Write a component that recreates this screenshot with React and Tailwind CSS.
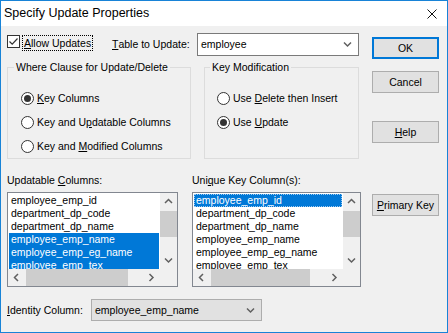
const Chevron = ({ dir = 'down', className = '' }) => {
  const paths = {
    up: 'M1 5 L4.5 1.5 L8 5',
    down: 'M1 1.5 L4.5 5 L8 1.5',
    left: 'M5 1 L1.5 4.5 L5 8',
    right: 'M1.5 1 L5 4.5 L1.5 8',
  };
  const horiz = dir === 'left' || dir === 'right';
  return (
    <svg width={horiz ? 7 : 9} height={horiz ? 9 : 7} className={className}>
      <path d={paths[dir]} fill="none" stroke="#606060" strokeWidth="1.5" />
    </svg>
  );
};

const Radio = ({ checked, children }) => (
  <div className="h-[24px] flex items-center gap-[3px]">
    <span className="w-[13px] h-[13px] rounded-full border border-[#333] bg-white flex items-center justify-center shrink-0">
      {checked && <span className="w-[7px] h-[7px] rounded-full bg-[#333]" />}
    </span>
    <span>{children}</span>
  </div>
);

const Button = ({ children, def, className = '' }) => (
  <div
    className={`w-[67px] h-[22px] flex items-center justify-center bg-[#e1e1e1] ${
      def ? 'border-2 border-[#0078d7]' : 'border border-[#adadad]'
    } ${className}`}
  >
    {children}
  </div>
);

const ListBox = ({ items, selected, focus, width, thumb }) => (
  <div
    className="h-[95px] border border-[#828790] bg-white grid grid-cols-[1fr_17px] grid-rows-[1fr_17px]"
    style={{ width }}
  >
    <div className="overflow-hidden pt-[1px] px-[1px]">
      {items.map((it, i) => (
        <div
          key={it}
          className={`h-[13px] leading-[13px] pl-[2px] whitespace-nowrap ${
            selected.includes(i) ? 'bg-[#0078d7] text-white' : ''
          } ${focus === i ? 'outline outline-1 outline-dotted outline-[#9cc9ef] -outline-offset-1' : ''}`}
        >
          {it}
        </div>
      ))}
    </div>
    <div className="bg-[#f0f0f0] flex flex-col">
      <div className="h-[17px] flex items-center justify-center">
        <Chevron dir="up" />
      </div>
      <div className="flex-1 flex flex-col">
        <div className="mt-[1px] h-[26px] bg-[#cdcdcd]" />
      </div>
      <div className="h-[17px] flex items-center justify-center">
        <Chevron dir="down" />
      </div>
    </div>
    <div className="bg-[#f0f0f0] flex">
      <div className="w-[17px] flex items-center justify-center">
        <Chevron dir="left" />
      </div>
      <div className="flex-1 flex">
        <div className="ml-[1px] h-full bg-[#cdcdcd]" style={{ width: thumb }} />
      </div>
      <div className="w-[17px] flex items-center justify-center">
        <Chevron dir="right" />
      </div>
    </div>
    <div className="bg-[#f0f0f0]" />
  </div>
);

const columns = [
  'employee_emp_id',
  'department_dp_code',
  'department_dp_name',
  'employee_emp_name',
  'employee_emp_eg_name',
  'employee_emp_tex',
];

export default function App() {
  return (
    <div className="w-[448px] h-[333px] border border-[#1883d7] bg-[#f0f0f0] flex flex-col text-black text-[10.5px] leading-[13px] font-['Liberation_Sans',Arial,sans-serif]">
      {/* title bar */}
      <div className="h-[25px] bg-white flex items-center justify-between pl-[3px] pr-[10px] shrink-0">
        <span className="text-[12.5px]">Specify Update Properties</span>
        <svg width="10" height="10">
          <path d="M0.5 0.5 L9.5 9.5 M9.5 0.5 L0.5 9.5" stroke="#111" strokeWidth="1" />
        </svg>
      </div>

      <div className="flex pl-[6px]">
        {/* left column */}
        <div className="w-[354px] flex flex-col">
          <div className="mt-[7px] h-[23px] flex items-start">
            <div className="w-[105px] flex items-start mt-[2px]">
              <span className="w-[13px] h-[13px] border border-[#333] bg-white flex items-center justify-center shrink-0">
                <svg width="11" height="11">
                  <path d="M1.5 5.5 L4.2 8.2 L9.5 2.5" fill="none" stroke="#333" strokeWidth="1.2" />
                </svg>
              </span>
              <span className="ml-[2px] h-[16px] px-[1px] flex items-center border border-dotted border-black">
                <u>A</u>llow Updates
              </span>
            </div>
            <span className="w-[85px] h-[23px] flex items-center">
              <u>T</u>able to Update:
            </span>
            <div className="w-[162px] h-[23px] border border-[#7a7a7a] bg-white flex items-center justify-between pl-[3px] pr-[6px]">
              <span>employee</span>
              <Chevron dir="down" />
            </div>
          </div>

          <div className="mt-[5px] flex gap-[13px]">
            <fieldset className="w-[184px] h-[98px] border border-[#dcdcdc]">
              <legend className="ml-[6px] px-[2px] leading-[13px]">Where Clause for Update/Delete</legend>
              <div className="pt-[12px] pl-[13px]">
                <Radio checked>
                  <u>K</u>ey Columns
                </Radio>
                <Radio>
                  Key and U<u>p</u>datable Columns
                </Radio>
                <Radio>
                  Key and <u>M</u>odified Columns
                </Radio>
              </div>
            </fieldset>
            <fieldset className="w-[155px] h-[98px] border border-[#dcdcdc]">
              <legend className="ml-[5px] px-[2px] leading-[13px]">Key Modification</legend>
              <div className="pt-[12px] pl-[12px]">
                <Radio>
                  Use <u>D</u>elete then Insert
                </Radio>
                <Radio checked>
                  Use <u>U</u>pdate
                </Radio>
              </div>
            </fieldset>
          </div>

          <div className="mt-[15px] flex gap-[14px]">
            <div className="flex flex-col">
              <span className="h-[13px]">
                Updatable <u>C</u>olumns:
              </span>
              <div className="mt-[5px]">
                <ListBox items={columns} selected={[3, 4, 5]} width={171} thumb={102} />
              </div>
            </div>
            <div className="flex flex-col">
              <span className="h-[13px]">
                Uni<u>q</u>ue Key Column(s):
              </span>
              <div className="mt-[5px]">
                <ListBox items={columns} selected={[0]} focus={0} width={169} thumb={99} />
              </div>
            </div>
          </div>

          <div className="mt-[12px] flex items-center">
            <span className="w-[84px]">
              <u>I</u>dentity Column:
            </span>
            <div className="w-[171px] h-[22px] border border-[#adadad] bg-[#e1e1e1] flex items-center justify-between pl-[3px] pr-[6px]">
              <span>employee_emp_name</span>
              <Chevron dir="down" />
            </div>
          </div>
        </div>

        {/* right column */}
        <div className="ml-[11px] flex flex-col">
          <Button def className="mt-[11px]">
            OK
          </Button>
          <Button className="mt-[12px]">Cancel</Button>
          <Button className="mt-[28px]">
            <u>H</u>elp
          </Button>
          <Button className="mt-[51px]">
            <u>P</u>rimary Key
          </Button>
        </div>
      </div>
    </div>
  );
}
